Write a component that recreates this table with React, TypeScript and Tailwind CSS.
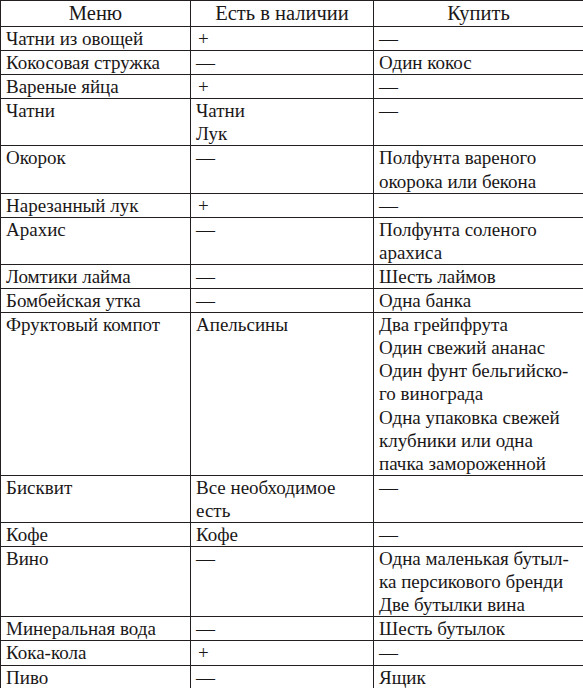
const rows: [string[], string[], string[]][] = [
  [['Чатни из овощей'], ['+'], ['—']],
  [['Кокосовая стружка'], ['—'], ['Один кокос']],
  [['Вареные яйца'], ['+'], ['—']],
  [['Чатни'], ['Чатни', 'Лук'], ['—']],
  [['Окорок'], ['—'], ['Полфунта вареного', 'окорока или бекона']],
  [['Нарезанный лук'], ['+'], ['—']],
  [['Арахис'], ['—'], ['Полфунта соленого', 'арахиса']],
  [['Ломтики лайма'], ['—'], ['Шесть лаймов']],
  [['Бомбейская утка'], ['—'], ['Одна банка']],
  [
    ['Фруктовый компот'],
    ['Апельсины'],
    [
      'Два грейпфрута',
      'Один свежий ананас',
      'Один фунт бельгийско-',
      'го винограда',
      'Одна упаковка свежей',
      'клубники или одна',
      'пачка замороженной',
    ],
  ],
  [['Бисквит'], ['Все необходимое', 'есть'], ['—']],
  [['Кофе'], ['Кофе'], ['—']],
  [['Вино'], ['—'], ['Одна маленькая бутыл-', 'ка персикового бренди', 'Две бутылки вина']],
  [['Минеральная вода'], ['—'], ['Шесть бутылок']],
  [['Кока-кола'], ['+'], ['—']],
  [['Пиво'], ['—'], ['Ящик']],
]

function Cell({ lines }: { lines: string[] }) {
  return (
    <td className="border border-[#231f20] pl-[5px] pr-1 align-top whitespace-nowrap">
      {lines.map((l, i) => (
        <div key={i} className={l === '+' ? 'pl-[2px]' : ''}>{l}</div>
      ))}
    </td>
  )
}

export default function App() {
  return (
    <div className="w-[583px] h-[688px] bg-white overflow-hidden font-['Liberation_Serif',serif]">
      <table className="w-[583px] table-fixed border-collapse text-[19px] leading-[23.1px] text-[#1a1718]">
        <colgroup>
          <col className="w-[190px]" />
          <col className="w-[183px]" />
          <col className="w-[210px]" />
        </colgroup>
        <thead>
          <tr className="h-[26px] text-[20.5px]">
            <th className="border border-[#231f20] font-normal text-center">Меню</th>
            <th className="border border-[#231f20] font-normal text-center">Есть в наличии</th>
            <th className="border border-[#231f20] font-normal text-center">Купить</th>
          </tr>
        </thead>
        <tbody>
          {rows.map((r, i) => (
            <tr key={i}>
              <Cell lines={r[0]} />
              <Cell lines={r[1]} />
              <Cell lines={r[2]} />
            </tr>
          ))}
        </tbody>
      </table>
    </div>
  )
}
